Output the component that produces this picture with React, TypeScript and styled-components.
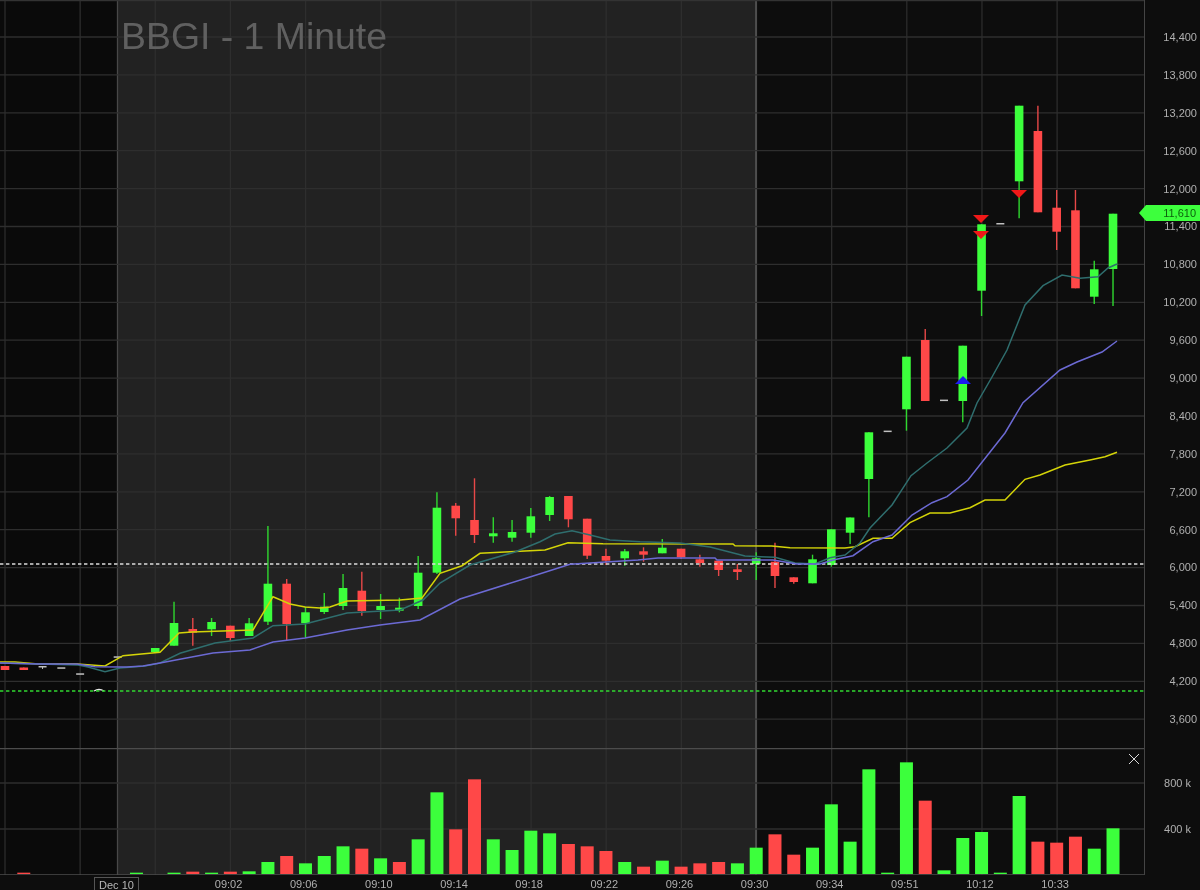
import React from "react";
import styled, { createGlobalStyle } from "styled-components";

const Global = createGlobalStyle`
  html, body { margin: 0; padding: 0; background: #0d0d0d; }
  body { font-family: "Liberation Sans", Arial, sans-serif; }
`;

const Page = styled.div`
  width: 1200px;
  height: 890px;
  overflow: hidden;
  display: flex;
  flex-direction: column;
  background: #0d0d0d;
  filter: blur(0.35px);
`;
const Row = styled.div<{ $h: number }>`
  position: relative;
  display: flex;
  height: ${(p) => p.$h}px;
  flex: none;
`;
const Plot = styled.svg`
  display: block;
  flex: none;
  width: 1144px;
  height: 100%;
`;
const Title = styled.div`
  position: absolute;
  left: 121px;
  top: 15px;
  font-size: 37.4px;
  line-height: 43px;
  color: #606060;
  white-space: nowrap;
`;
const AxisColumn = styled.div<{ $top: number; $right: number }>`
  flex: 1;
  display: flex;
  flex-direction: column;
  align-items: flex-end;
  padding: ${(p) => p.$top}px ${(p) => p.$right}px 0 0;
  border-left: 1.5px solid #444;
`;
const AxisLabel = styled.div<{ $h: number }>`
  height: ${(p) => p.$h}px;
  line-height: ${(p) => p.$h}px;
  font-size: 11px;
  color: #b0b0b0;
  white-space: nowrap;
`;
const PriceTag = styled.div`
  position: absolute;
  left: 1139px;
  top: 205px;
  width: 61px;
  height: 16px;
  box-sizing: border-box;
  padding-right: 4px;
  text-align: right;
  font-size: 11px;
  line-height: 17px;
  color: #0c5f0c;
  background: #3dff3d;
  clip-path: polygon(0 50%, 7px 0, 100% 0, 100% 100%, 7px 100%);
`;
const CloseButton = styled.svg`
  position: absolute;
  left: 1128px;
  top: 5px;
  width: 12px;
  height: 12px;
`;
const TimeAxis = styled.div`
  position: relative;
  display: flex;
  flex: 1;
  padding-left: 191px;
  background: #0d0d0d;
`;
const TimeLabel = styled.div`
  flex: none;
  width: 75.15px;
  text-align: center;
  font-size: 11px;
  line-height: 19px;
  color: #b0b0b0;
`;
const DateLabel = styled.div`
  position: absolute;
  left: 94px;
  top: 2px;
  width: 45px;
  height: 13px;
  box-sizing: border-box;
  border: 1px solid #555;
  border-bottom: none;
  text-align: center;
  font-size: 11px;
  line-height: 15px;
  color: #b8b8b8;
  background: #0d0d0d;
`;

const GREEN = "#3cff3c";
const RED = "#ff4848";
const STEP = 18.78;
const xOf = (i: number) => 5 + STEP * i;

type Candle = [number, "g" | "r", number, number, number, number];
const candles: Candle[] = [
  [0, "r", 666, 666, 670, 670],
  [1, "r", 667.5, 667.5, 670, 670],
  [8, "g", 648, 648, 652, 652],
  [9, "g", 601.7, 623, 645.7, 645.7],
  [10, "r", 618, 629, 632.7, 645.7],
  [11, "g", 618, 622, 629.3, 636],
  [12, "r", 625.7, 625.7, 638, 641],
  [13, "g", 618, 623.3, 636, 636],
  [14, "g", 526, 583.7, 621.7, 625],
  [15, "r", 579, 583.7, 624, 640],
  [16, "g", 606.7, 612.3, 623.3, 638],
  [17, "g", 593, 606.7, 612, 614],
  [18, "g", 574, 588, 606, 610],
  [19, "r", 571.7, 590.7, 611, 615.7],
  [20, "g", 594, 606, 610, 619],
  [21, "g", 597.7, 607.7, 610.7, 612.3],
  [22, "g", 556, 572.7, 606, 609],
  [23, "g", 492.3, 507.7, 572.7, 574],
  [24, "r", 503, 505.7, 518.3, 535.7],
  [25, "r", 478.3, 520, 535, 543],
  [26, "g", 517.3, 533.3, 536.3, 542.7],
  [27, "g", 520, 532, 537.7, 541.7],
  [28, "g", 508, 516.3, 532.7, 537.7],
  [29, "g", 496, 497, 515, 521],
  [30, "r", 496, 496, 519.3, 527.3],
  [31, "r", 518.7, 518.7, 555.7, 559],
  [32, "r", 548.7, 556, 560.7, 565],
  [33, "g", 549, 551.3, 558.3, 565.7],
  [34, "r", 547.3, 551.3, 554.7, 561.7],
  [35, "g", 539, 547.7, 553.3, 553.3],
  [36, "r", 548.7, 548.7, 557.3, 559],
  [37, "r", 554.7, 559.3, 563, 566.7],
  [38, "r", 560.7, 560.7, 570, 576],
  [39, "r", 564, 569.3, 572, 580],
  [40, "g", 552.3, 558.3, 564, 580],
  [41, "r", 542.7, 561.7, 576, 588],
  [42, "r", 577.3, 577.3, 582, 583.7],
  [43, "g", 554.7, 559.3, 583.3, 583.3],
  [44, "g", 529.3, 529.3, 565, 566.7],
  [45, "g", 517.5, 517.5, 532.7, 544],
  [46, "g", 432.3, 432.3, 479, 517.3],
  [48, "g", 356.7, 356.7, 409.3, 430.7],
  [49, "r", 329, 340, 401, 401],
  [51, "g", 345.7, 345.7, 401, 422.3],
  [52, "g", 224.3, 224.3, 290.7, 316],
  [54, "g", 105.7, 105.7, 181.3, 218.3],
  [55, "r", 105.7, 131, 212.3, 212.3],
  [56, "r", 190, 207.7, 231.7, 250],
  [57, "r", 190, 210.3, 288.3, 288.3],
  [58, "g", 260.7, 269.3, 296.7, 304],
  [59, "g", 213.7, 213.7, 269, 306],
];

const dashes: [number, number][] = [
  [2, 666.7],
  [3, 668],
  [4, 674],
  [6, 657],
  [47, 431.3],
  [50, 400.3],
  [53, 223.7],
];

const yellow =
  "0,662 15,662 38,664 77,664 105,666 123,655.7 160,652.3 179,633 192,632 253,630 273,596.7 290,604 305,607 320,608 330,607 347,601 400,600 422,598 440,573.3 462,565.7 480,553.3 510,551.7 545,550 568,542.7 603,543.7 733,544 735,545.7 771.7,546 790,547.7 845,548 855,546.7 873,538.3 892,538.3 910,522.7 930,513 950,513 970,507.7 985,500 1005,500 1025,479.3 1040,475 1065,465 1090,460 1105,456.7 1117,452.3";
const teal =
  "0,663 78,665 88,667 105,671.7 120,668 145,666 160,663 180,653.3 215,643 253,638 273,625.7 305,624 347,613 400,610 423,600 440,583 470,565 515,552 540,541.7 555,534 572,530.7 590,535 610,540 640,541.7 680,543 710,547 745,556 775,557.3 795,563 815,564 830,557.7 845,555 860,543 870,528 892,505 911,475.7 927,463 947,448 967,428 977,403 992,377 1007,350 1025,305 1043,285.7 1062,275 1080,278.3 1098,276.7 1108,268 1117,264";
const purple =
  "0,663 38,664 77,664 95,666.7 127,667 143,666 160,663 213,653 250,650 273,642 305,638 347,630 380,625 420,620 460,599 530,577 570,564.3 638,560 658,558 715,558 717,560 773,560 797,564 820,564 833,560 853,555.7 873,541.7 892,535 912,515 932,502.7 947,496.7 968,480 1005,433 1023,402.7 1060,370 1077,362 1102,352 1117,341";

const volumes: [number, "g" | "r", number][] = [
  [1, "r", 398], [7, "g", 398], [9, "g", 398], [10, "r", 395], [11, "g", 398], [12, "r", 395],
  [13, "g", 394], [14, "g", 366], [15, "r", 348], [16, "g", 370], [17, "g", 348], [18, "g", 319],
  [19, "r", 326], [20, "g", 355], [21, "r", 366], [22, "g", 298], [23, "g", 157], [24, "r", 268],
  [25, "r", 118], [26, "g", 298], [27, "g", 330], [28, "g", 272], [29, "g", 280], [30, "r", 312],
  [31, "r", 319], [32, "r", 333], [33, "g", 366], [34, "r", 380], [35, "g", 362], [36, "r", 380],
  [37, "r", 370], [38, "r", 366], [39, "g", 370], [40, "g", 323], [41, "r", 283], [42, "r", 344],
  [43, "g", 323], [44, "g", 193], [45, "g", 305], [46, "g", 88], [47, "g", 398], [48, "g", 67],
  [49, "r", 182], [50, "g", 391], [51, "g", 294], [52, "g", 276], [53, "g", 398], [54, "g", 168],
  [55, "r", 305], [56, "r", 308], [57, "r", 290], [58, "g", 326], [59, "g", 265],
];

const vGrid = Array.from({ length: 15 }, (_, i) => 5 + 75.15 * i);
const priceLabels = [
  "14,400", "13,800", "13,200", "12,600", "12,000", "11,400", "10,800", "10,200", "9,600", "9,000",
  "8,400", "7,800", "7,200", "6,600", "6,000", "5,400", "4,800", "4,200", "3,600",
];
const hGrid = priceLabels.map((_, i) => 37 + 37.9 * i);
const timeLabels = ["09:02", "09:06", "09:10", "09:14", "09:18", "09:22", "09:26", "09:30", "09:34", "09:51", "10:12", "10:33"];

const Background = ({ top, height }: { top: number; height: number }) => (
  <>
    <rect x={0} y={top} width={117} height={height} fill="#0a0a0a" />
    <rect x={117} y={top} width={639} height={height} fill="#222222" />
    <rect x={756} y={top} width={388} height={height} fill="#0d0d0d" />
    {vGrid.map((x) => (
      <line key={x} x1={x} x2={x} y1={top} y2={top + height} stroke={x > 117 && x < 756 ? "#2e2e2e" : "#2c2c2c"} strokeWidth={1.3} />
    ))}
    <line x1={117.5} x2={117.5} y1={top} y2={top + height} stroke="#484848" strokeWidth={1.3} />
    <line x1={756} x2={756} y1={top} y2={top + height} stroke="#5a5a5a" strokeWidth={1.5} />
  </>
);

const Candles = () => (
  <>
    {candles.map(([i, c, wt, bt, bb, wb]) => (
      <g key={i}>
        <line x1={xOf(i)} x2={xOf(i)} y1={wt} y2={wb} stroke={c === "g" ? "#2fd82f" : "#e84848"} strokeWidth={1.4} />
        <rect x={xOf(i) - 4.3} y={bt} width={8.6} height={bb - bt} fill={c === "g" ? GREEN : RED} />
      </g>
    ))}
    {dashes.map(([i, y]) => (
      <rect key={i} x={xOf(i) - 4} y={y - 0.7} width={8} height={1.5} fill="#c0c0c0" />
    ))}
    <line x1={xOf(2)} x2={xOf(2)} y1={667} y2={669} stroke="#c0c0c0" />
    <path d="M94 691 Q99 688 104 691" stroke="#e8e8e8" strokeWidth={1.3} fill="none" />
  </>
);

const Down = ({ x, y }: { x: number; y: number }) => <polygon points={`${x - 8},${y} ${x + 8},${y} ${x},${y + 8}`} fill="#f01818" />;

export default function App() {
  return (
    <>
      <Global />
      <Page>
        <Row $h={748}>
          <Plot viewBox="0 0 1144 748">
            <Background top={0} height={748} />
            <line x1={0} x2={1144} y1={0.7} y2={0.7} stroke="#333" strokeWidth={1.3} />
            {hGrid.map((y) => (
              <line key={y} x1={0} x2={1144} y1={y} y2={y} stroke="#2e2e2e" strokeWidth={1.3} />
            ))}
            <Candles />
            <line x1={0} x2={1144} y1={564} y2={564} stroke="#dcdcdc" strokeWidth={1.5} strokeDasharray="3.4 2.6" />
            <line x1={0} x2={1144} y1={691} y2={691} stroke="#30d830" strokeWidth={1.4} strokeDasharray="3.4 2.6" />
            <polyline points={yellow} fill="none" stroke="#d4d408" strokeWidth={1.5} />
            <polyline points={teal} fill="none" stroke="#2f6e6e" strokeWidth={1.5} />
            <polyline points={purple} fill="none" stroke="#6c6ad4" strokeWidth={1.5} />
            <Down x={981} y={215} />
            <Down x={981} y={231} />
            <Down x={1019} y={190} />
            <polygon points="955,384 971,384 963,376" fill="#1c1cf0" />
          </Plot>
          <AxisColumn $top={19} $right={3}>
            {priceLabels.map((l) => (
              <AxisLabel key={l} $h={37.9}>{l}</AxisLabel>
            ))}
          </AxisColumn>
          <Title>BBGI - 1 Minute</Title>
          <PriceTag>11,610</PriceTag>
        </Row>
        <Row $h={127}>
          <Plot viewBox="0 748 1144 127">
            <Background top={748} height={127} />
            <line x1={0} x2={1144} y1={783} y2={783} stroke="#2e2e2e" strokeWidth={1.3} />
            <line x1={0} x2={1144} y1={829} y2={829} stroke="#2e2e2e" strokeWidth={1.3} />
            <line x1={0} x2={1144} y1={748.5} y2={748.5} stroke="#4c4c4c" strokeWidth={1.3} />
            {volumes.map(([i, c, v]) => {
              const top = 740 + v / 3;
              return <rect key={i} x={xOf(i) - 6.5} y={top} width={13} height={874 - top} fill={c === "g" ? GREEN : RED} />;
            })}
            <line x1={0} x2={1144} y1={875} y2={875} stroke="#4c4c4c" strokeWidth={1.3} />
          </Plot>
          <AxisColumn $top={12} $right={9}>
            <AxisLabel $h={46}>800 k</AxisLabel>
            <AxisLabel $h={46}>400 k</AxisLabel>
          </AxisColumn>
          <CloseButton viewBox="0 0 12 12">
            <path d="M1 1L11 11M11 1L1 11" stroke="#d8d8d8" strokeWidth={1} fill="none" />
          </CloseButton>
        </Row>
        <TimeAxis>
          <DateLabel>Dec 10</DateLabel>
          {timeLabels.map((t) => (
            <TimeLabel key={t}>{t}</TimeLabel>
          ))}
        </TimeAxis>
      </Page>
    </>
  );
}
